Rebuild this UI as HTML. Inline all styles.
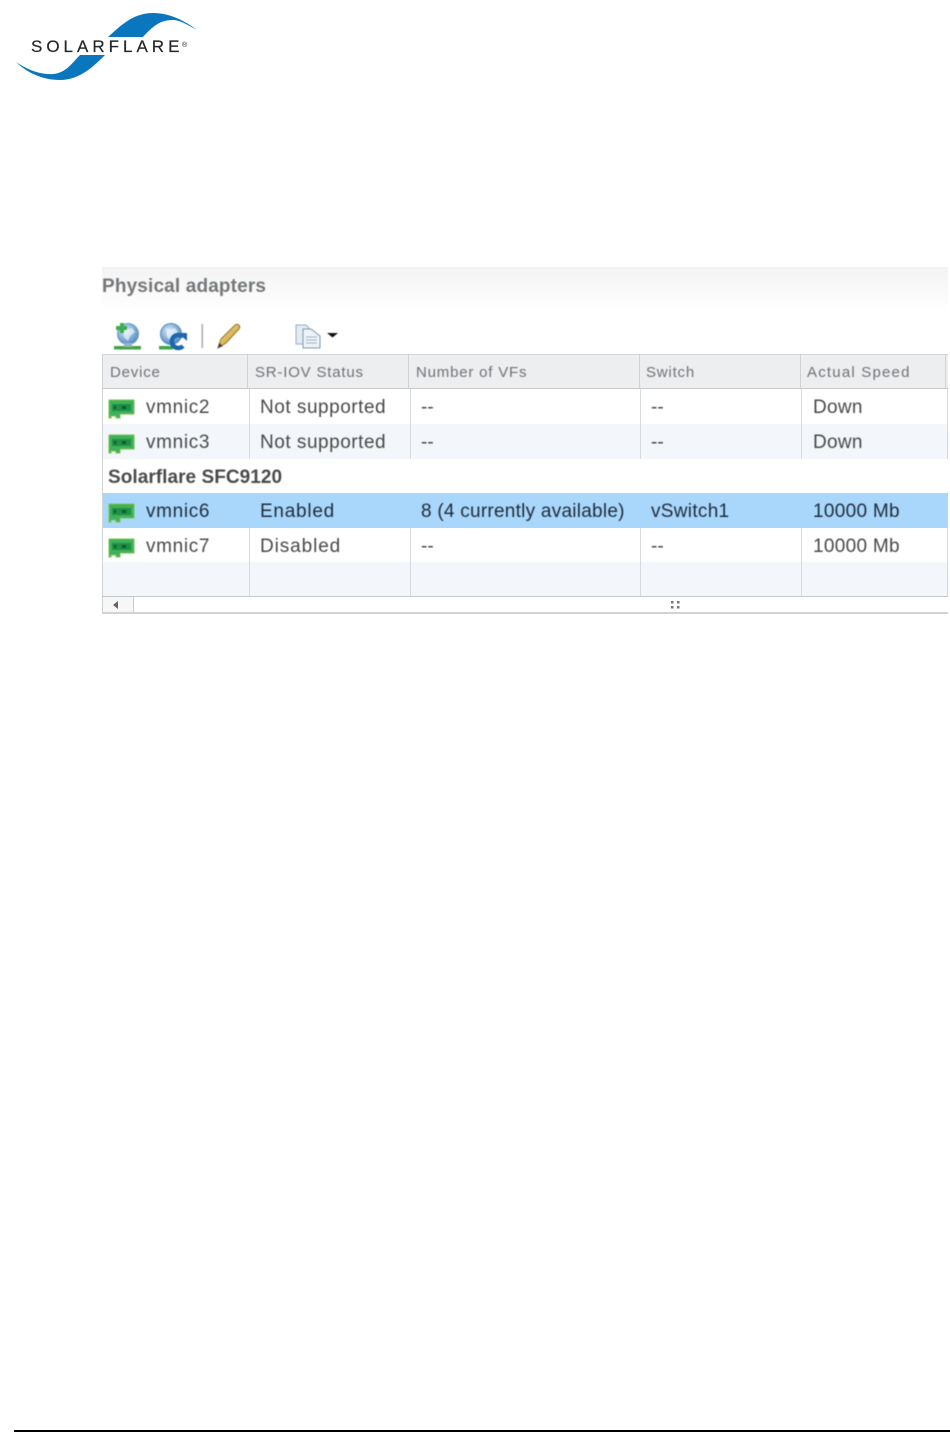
<!DOCTYPE html>
<html lang="en">
<head>
<meta charset="utf-8">
<title>Physical adapters</title>
<style>
html,body{margin:0;padding:0;background:#fff}
body{width:950px;height:1432px;position:relative;overflow:hidden;font-family:"Liberation Sans",sans-serif}
.a{position:absolute}
.t{position:absolute;white-space:nowrap;font-size:19px;line-height:22px;color:#484848;filter:blur(.4px)}
.v{letter-spacing:.65px}
.n{letter-spacing:.52px}
.k{letter-spacing:.3px}
.h{position:absolute;white-space:nowrap;font-size:15px;line-height:18px;color:#6f7275;letter-spacing:.8px;top:364px;filter:blur(.4px)}
.s{color:#1f2b3b}
.nic{position:absolute;left:108px;width:27px;height:20px;filter:blur(.4px)}
</style>
</head>
<body>
<svg class="a" style="left:0;top:0;filter:blur(.3px)" width="220" height="100" viewBox="0 0 220 100">
<path fill="#0a76bd" d="M108 37C120 26 133 13 153 13C170 13 185 21 197 30C186 24 180 20 172 20C160 20 152 27 143 37Z"/>
<path fill="#0a76bd" d="M16 62C26 69 40 75 53 74C66 73 72 63 80 55L105 55C94 66 80 80 60 80C42 80 26 72 16 62Z"/>
<text x="31" y="52" font-family="Liberation Sans" font-size="17" letter-spacing="4" stroke="#23262b" stroke-width=".2" fill="#23262b">SOLARFLARE</text>
<text x="182" y="47" font-family="Liberation Sans" font-size="7" fill="#23262b">®</text>
</svg>

<div class="a" style="left:102px;top:267px;width:846px;height:44px;background:linear-gradient(#f3f3f3,#fff)"></div>
<div class="t" style="left:102px;top:276px;font-size:19px;font-weight:bold;color:#74777a;letter-spacing:.15px">Physical adapters</div>

<svg class="a" style="left:108px;top:320px;filter:blur(.4px)" width="240" height="32" viewBox="0 0 240 32">
<defs>
<radialGradient id="g" cx=".4" cy=".35" r=".7"><stop offset="0" stop-color="#d6e8f6"/><stop offset="1" stop-color="#4a86be"/></radialGradient>
<linearGradient id="p" x1="0" y1="0" x2="1" y2="1"><stop offset="0" stop-color="#f2d98a"/><stop offset="1" stop-color="#c49a34"/></linearGradient>
</defs>
<circle cx="20" cy="14" r="10.500" fill="url(#g)" stroke="#6a9ac4"/>
<path d="M15 8q5 2 9 0l3 4-5 4-2 5-4-4z" fill="#f0f6fb" opacity=".7"/>
<rect x="6" y="26" width="27" height="3.500" fill="#3fa648"/><rect x="16" y="23" width="8" height="4" fill="#9ab2c4"/>
<path d="M10 4h4v-3h4v3h3v4h-3v3h-4v-3h-4z" transform="translate(-2 2)" fill="#3cae4e"/>
<circle cx="63" cy="14" r="10.500" fill="url(#g)" stroke="#4f88bb"/>
<path d="M58 8q5 2 9 0l3 4-5 4-2 5-4-4z" fill="#f0f6fb" opacity=".7"/>
<rect x="51" y="26" width="14" height="3.500" fill="#3fa648"/>
<path d="M75 17a6.500 6.500 0 1 0 0 9" fill="none" stroke="#1d66ae" stroke-width="4.500"/>
<path d="M70 13h9v8z" fill="#1d66ae"/>
<rect x="93.500" y="4" width="1.500" height="24" fill="#a9aaa5"/>
<path d="M110 28l3-9 14-14c3-2 6 1 4 4L118 23z" fill="url(#p)" stroke="#8f7226" stroke-width="1"/>
<path d="M110 28l1-5 4 3z" fill="#3f3929"/>
<path d="M188 5h10l3 3v16h-13z" fill="#e3ecf4" stroke="#97acbf"/>
<path d="M195 9h8l9 7v12h-17z" fill="#eef3f8" stroke="#7f98b0"/>
<path d="M198 17h11M198 20h11M198 23h11" stroke="#9db2c5"/>
<path d="M219 13h11l-5.500 4.500z" fill="#111"/>
</svg>

<!-- header -->
<div class="a" style="left:102px;top:354px;width:846px;height:35px;background:#eceef0;border-top:1px solid #d6d7d8;border-bottom:1px solid #c9cacb;box-sizing:border-box"></div>
<div class="a" style="left:102px;top:354px;width:1px;height:260px;background:#d0d2d3"></div>
<div class="a" style="left:247px;top:354px;width:1px;height:34px;background:#cfd1d2"></div>
<div class="a" style="left:408px;top:354px;width:1px;height:34px;background:#cfd1d2"></div>
<div class="a" style="left:639px;top:354px;width:1px;height:34px;background:#cfd1d2"></div>
<div class="a" style="left:800px;top:354px;width:1px;height:34px;background:#cfd1d2"></div>
<div class="a" style="left:945px;top:354px;width:1px;height:34px;background:#cfd1d2"></div>
<div class="h" style="left:110px">Device</div>
<div class="h" style="left:255px">SR-IOV Status</div>
<div class="h" style="left:416px">Number of VFs</div>
<div class="h" style="left:646px">Switch</div>
<div class="h" style="left:807px;letter-spacing:1.2px">Actual Speed</div>

<!-- rows -->
<div class="a" style="left:103px;top:424px;width:845px;height:35px;background:#f3f6fa"></div>
<div class="a" style="left:103px;top:493px;width:845px;height:35px;background:#a9d7fb"></div>
<div class="a" style="left:103px;top:562px;width:845px;height:34px;background:#f3f6fa"></div>

<div class="a" style="left:249px;top:389px;width:1px;height:70px;background:#d8d9da"></div>
<div class="a" style="left:410px;top:389px;width:1px;height:70px;background:#d8d9da"></div>
<div class="a" style="left:640px;top:389px;width:1px;height:70px;background:#d8d9da"></div>
<div class="a" style="left:801px;top:389px;width:1px;height:70px;background:#d8d9da"></div>
<div class="a" style="left:947px;top:389px;width:1px;height:70px;background:#d8d9da"></div>
<div class="a" style="left:249px;top:528px;width:1px;height:68px;background:#d8d9da"></div>
<div class="a" style="left:410px;top:528px;width:1px;height:68px;background:#d8d9da"></div>
<div class="a" style="left:640px;top:528px;width:1px;height:68px;background:#d8d9da"></div>
<div class="a" style="left:801px;top:528px;width:1px;height:68px;background:#d8d9da"></div>
<div class="a" style="left:947px;top:528px;width:1px;height:68px;background:#d8d9da"></div>

<svg class="nic" style="top:399px" viewBox="0 0 27 20"><path d="M1 1h25v14H12v4H8v-2H3v2H1z" fill="#3eb15c" stroke="#7cc14a"/><path d="M4 5h19v7H4z" fill="#1e8f45"/><path d="M6 7h2v3H6zM14 7h4v3h-4z" fill="#0d5c2a"/></svg>
<svg class="nic" style="top:434px" viewBox="0 0 27 20"><path d="M1 1h25v14H12v4H8v-2H3v2H1z" fill="#3eb15c" stroke="#7cc14a"/><path d="M4 5h19v7H4z" fill="#1e8f45"/><path d="M6 7h2v3H6zM14 7h4v3h-4z" fill="#0d5c2a"/></svg>
<svg class="nic" style="top:503px" viewBox="0 0 27 20"><path d="M1 1h25v14H12v4H8v-2H3v2H1z" fill="#3eb15c" stroke="#7cc14a"/><path d="M4 5h19v7H4z" fill="#1e8f45"/><path d="M6 7h2v3H6zM14 7h4v3h-4z" fill="#0d5c2a"/></svg>
<svg class="nic" style="top:538px" viewBox="0 0 27 20"><path d="M1 1h25v14H12v4H8v-2H3v2H1z" fill="#3eb15c" stroke="#7cc14a"/><path d="M4 5h19v7H4z" fill="#1e8f45"/><path d="M6 7h2v3H6zM14 7h4v3h-4z" fill="#0d5c2a"/></svg>

<div class="t v" style="left:146px;top:397px">vmnic2</div>
<div class="t n" style="left:260px;top:397px">Not supported</div>
<div class="t" style="left:421px;top:397px">--</div>
<div class="t" style="left:651px;top:397px">--</div>
<div class="t k" style="left:813px;top:397px">Down</div>

<div class="t v" style="left:146px;top:432px">vmnic3</div>
<div class="t n" style="left:260px;top:432px">Not supported</div>
<div class="t" style="left:421px;top:432px">--</div>
<div class="t" style="left:651px;top:432px">--</div>
<div class="t k" style="left:813px;top:432px">Down</div>

<div class="t" style="left:108px;top:467px;font-weight:bold;color:#4a4a4a;letter-spacing:.05px">Solarflare SFC9120</div>

<div class="t s v" style="left:146px;top:501px">vmnic6</div>
<div class="t s" style="left:260px;top:501px;letter-spacing:.75px">Enabled</div>
<div class="t s" style="left:421px;top:501px;letter-spacing:.25px">8 (4 currently available)</div>
<div class="t s k" style="left:651px;top:501px">vSwitch1</div>
<div class="t s k" style="left:813px;top:501px">10000 Mb</div>

<div class="t v" style="left:146px;top:536px">vmnic7</div>
<div class="t" style="left:260px;top:536px;letter-spacing:.9px">Disabled</div>
<div class="t" style="left:421px;top:536px">--</div>
<div class="t" style="left:651px;top:536px">--</div>
<div class="t k" style="left:813px;top:536px">10000 Mb</div>

<!-- scrollbar -->
<div class="a" style="left:102px;top:596px;width:846px;height:1px;background:#c5c6c7"></div>
<div class="a" style="left:102px;top:612px;width:846px;height:2px;background:#d2d3d4"></div>
<div class="a" style="left:103px;top:597px;width:30px;height:15px;background:#f7f7f7"></div>
<div class="a" style="left:133px;top:597px;width:1px;height:15px;background:#c9cacb"></div>
<svg class="a" style="left:112px;top:600px" width="8" height="10" viewBox="0 0 8 10"><path d="M1 5l5-4v8z" fill="#666"/></svg>
<svg class="a" style="left:670px;top:600px" width="12" height="10" viewBox="0 0 12 10" fill="#777"><rect x="1" y="1" width="2.500" height="2.500"/><rect x="7" y="1" width="2.500" height="2.500"/><rect x="1" y="6" width="2.500" height="2.500"/><rect x="7" y="6" width="2.500" height="2.500"/></svg>

<!-- footer rule -->
<div class="a" style="left:14px;top:1430px;width:936px;height:2px;background:#000"></div>
</body>
</html>
